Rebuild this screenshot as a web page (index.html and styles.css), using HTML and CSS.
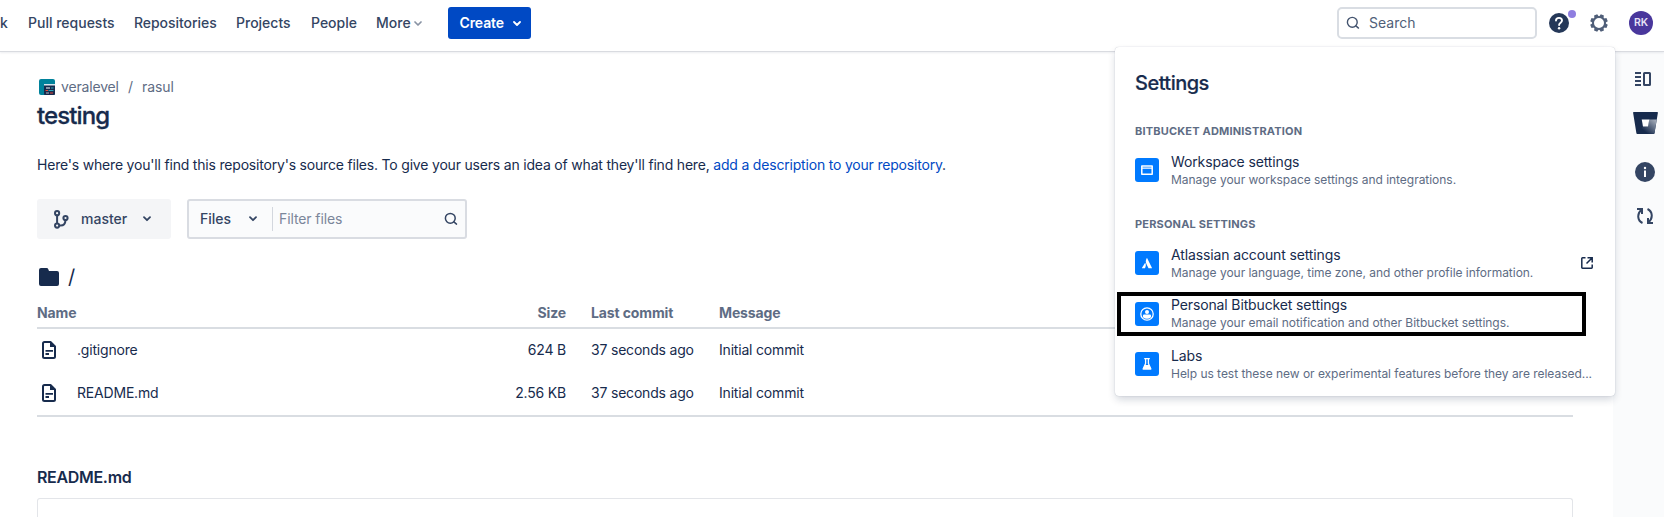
FILE: index.html
```html
<!DOCTYPE html>
<html lang="en">
<head>
<meta charset="utf-8">
<title>testing - Bitbucket</title>
<link rel="stylesheet" href="styles.css">
</head>
<body>
<header class="topbar">
  <nav class="nav">
    <span class="nav-item nav-cut">k</span>
    <span class="nav-item nav-pull">Pull requests</span>
    <span class="nav-item nav-repos">Repositories</span>
    <span class="nav-item nav-projects">Projects</span>
    <span class="nav-item nav-people">People</span>
    <span class="nav-item nav-more">More</span>
    <svg class="chev-more" width="8" height="5" viewBox="0 0 8 5"><path d="M1 1l3 3 3-3" fill="none" stroke="#8993a4" stroke-width="1.7" stroke-linecap="round" stroke-linejoin="round"/></svg>
  </nav>
  <button class="create"><span>Create</span><svg width="8" height="5" viewBox="0 0 8 5"><path d="M1 1l3 3 3-3" fill="none" stroke="#fff" stroke-width="1.8" stroke-linecap="round" stroke-linejoin="round"/></svg></button>
  <div class="search"><svg width="14" height="14" viewBox="0 0 14 14" fill="none" stroke="#44546f" stroke-width="1.4" stroke-linecap="round"><circle cx="6.3" cy="6.3" r="4.9"/><path d="M9.9 9.9l2.6 2.2"/></svg><span>Search</span></div>
  <div class="help">
    <svg width="20" height="20" viewBox="0 0 20 20"><circle cx="10" cy="10" r="10" fill="#253858"/><path d="M7 7.6C7 5.8 8.3 4.9 10 4.9s3 1 3 2.6c0 2.1-2.9 2.2-2.9 4.5" fill="none" stroke="#fff" stroke-width="1.9" stroke-linecap="round"/><circle cx="10.1" cy="15.2" r="1.2" fill="#fff"/></svg>
    <span class="dot"></span>
  </div>
  <svg class="gear" width="18" height="18" viewBox="0 0 18 18"><g fill="#505f79"><path id="tooth" d="M6.600 3.500L7.300.2h3.400L11.400 3.500z" transform="rotate(22.5 9 9)"/><use href="#tooth" transform="rotate(45 9 9)"/><use href="#tooth" transform="rotate(90 9 9)"/><use href="#tooth" transform="rotate(135 9 9)"/><use href="#tooth" transform="rotate(180 9 9)"/><use href="#tooth" transform="rotate(225 9 9)"/><use href="#tooth" transform="rotate(270 9 9)"/><use href="#tooth" transform="rotate(315 9 9)"/></g><circle cx="9" cy="9" r="6" fill="#fff" stroke="#505f79" stroke-width="2"/></svg>
  <span class="avatar">RK</span>
</header>

<div class="body">
  <main class="main">
    <div class="crumbs">
      <svg width="16" height="16" viewBox="0 0 16 16"><rect width="16" height="16" rx="2" fill="#00829b"/><rect x="5" y="5.300" width="11" height="10.700" rx="1" fill="#172b4d"/><rect x="5" y="5" width="11" height="1.500" fill="#d5e5ee"/><path d="M7 9h4" stroke="#fff" stroke-width="1"/><path d="M12 9h2.500M9.500 11.500h5" stroke="#2aa6bd" stroke-width="1"/><path d="M6.500 11.500H9M11 14h3" stroke="#e5493a" stroke-width="1"/><path d="M7 14h3" stroke="#b3bac5" stroke-width="1"/></svg>
      <span class="crumb-ws">veralevel</span><span class="crumb-sep">/</span><span class="crumb-pr">rasul</span>
    </div>
    <h1 class="title">testing</h1>
    <p class="desc">Here's where you'll find this repository's source files. To give your users an idea of what they'll find here, <a class="link">add a description to your repository</a>.</p>
    <div class="controls">
      <button class="branch">
        <svg width="15" height="19" viewBox="0 0 15 19" fill="none" stroke="#344563" stroke-width="2"><circle cx="3.100" cy="3.200" r="2.100"/><circle cx="3.100" cy="15.600" r="2.100"/><circle cx="11.500" cy="8" r="2.100"/><path d="M3.100 5.300v8.200M5.200 15.600h1.500c3 0 4.600-1.800 4.800-5.500"/></svg>
        <span class="branch-name">master</span>
        <svg width="8" height="6" viewBox="0 0 8 6"><path d="M1 1.200l3 3 3-3" fill="none" stroke="#344563" stroke-width="1.800" stroke-linecap="round" stroke-linejoin="round"/></svg>
      </button>
      <div class="filter">
        <span class="filter-kind">Files</span>
        <svg width="8" height="6" viewBox="0 0 8 6"><path d="M1 1.200l3 3 3-3" fill="none" stroke="#344563" stroke-width="1.800" stroke-linecap="round" stroke-linejoin="round"/></svg>
        <span class="filter-rule"></span>
        <span class="filter-text">Filter files</span>
        <svg width="14" height="14" viewBox="0 0 14 14" fill="none" stroke="#344563" stroke-width="1.500" stroke-linecap="round"><circle cx="6.300" cy="6.300" r="4.900"/><path d="M9.900 9.900l2.600 2.200"/></svg>
      </div>
    </div>
    <div class="path">
      <svg width="20" height="18" viewBox="0 0 20 18"><path d="M0 2a2 2 0 0 1 2-2h5.500A2 2 0 0 1 9.400 1.400L10 3h8a2 2 0 0 1 2 2v11a2 2 0 0 1-2 2H2a2 2 0 0 1-2-2z" fill="#172b4d"/></svg>
      <span>/</span>
    </div>
    <div class="table">
      <div class="tr th"><span>Name</span><span class="size">Size</span><span class="commit">Last commit</span><span>Message</span></div>
      <div class="tr"><span class="file"><svg width="14" height="18" viewBox="0 0 14 18"><path d="M8.500 1H2.500A1.500 1.500 0 0 0 1 2.500v13A1.500 1.500 0 0 0 2.500 17h9a1.500 1.500 0 0 0 1.500-1.500V5.500z" fill="none" stroke="#172b4d" stroke-width="2" stroke-linejoin="round"/><path d="M8 1v5h5z" fill="#172b4d"/><path d="M3.500 9.900h7.500M3.500 13h3.500" stroke="#172b4d" stroke-width="1.800"/></svg><span>.gitignore</span></span><span class="size">624 B</span><span class="commit">37 seconds ago</span><span>Initial commit</span></div>
      <div class="tr"><span class="file"><svg width="14" height="18" viewBox="0 0 14 18"><path d="M8.500 1H2.500A1.500 1.500 0 0 0 1 2.500v13A1.500 1.500 0 0 0 2.500 17h9a1.500 1.500 0 0 0 1.500-1.500V5.500z" fill="none" stroke="#172b4d" stroke-width="2" stroke-linejoin="round"/><path d="M8 1v5h5z" fill="#172b4d"/><path d="M3.500 9.900h7.500M3.500 13h3.500" stroke="#172b4d" stroke-width="1.800"/></svg><span>README.md</span></span><span class="size">2.56 KB</span><span class="commit">37 seconds ago</span><span>Initial commit</span></div>
    </div>
    <h2 class="readme">README.md</h2>
    <div class="readme-box"></div>
  </main>
  <aside class="rail">
    <svg class="rail-panel" width="16" height="14" viewBox="0 0 16 14"><path d="M0 1h6M0 5h6M0 9h6M0 13h6" stroke="#344563" stroke-width="2"/><rect x="9" y="1" width="6" height="12" fill="none" stroke="#344563" stroke-width="2" rx=".5"/></svg>
    <svg class="rail-bb" width="25" height="22" viewBox="0 0 25 22"><defs><linearGradient id="bb" x1="1" y1=".1" x2=".3" y2=".75"><stop offset="0" stop-color="#a5adba"/><stop offset="1" stop-color="#172b4d"/></linearGradient></defs><path d="M.8 0h23.400a.7.700 0 0 1 .7.800L21.500 21.300a.8.800 0 0 1-.8.700H4.300a.9.900 0 0 1-.9-.7L.1.800A.7.700 0 0 1 .8 0z" fill="#172b4d"/><path d="M23.700 7.500H16L14.800 14.500H10L4.500 21.800h16.200a.8.800 0 0 0 .8-.7z" fill="url(#bb)"/><path d="M8.700 7.500h7.600L15 14.500H10z" fill="#fff"/></svg>
    <svg class="rail-info" width="20" height="20" viewBox="0 0 20 20"><circle cx="10" cy="10" r="10" fill="#344563"/><rect x="9" y="8.500" width="2" height="6.500" fill="#fff"/><circle cx="10" cy="6" r="1.200" fill="#fff"/></svg>
    <svg class="rail-sync" width="16" height="16" viewBox="0 0 16 16" fill="none" stroke="#344563" stroke-width="2"><path d="M5.500 15C.2 12.500-.2 5.500 4.600 1.800M0 1h5v5"/><path d="M10.500 1c5.300 2.500 5.700 9.500.9 13.200M16 15h-5v-5"/></svg>
  </aside>
</div>

<section class="popup">
  <h2 class="pop-title">Settings</h2>
  <h3 class="pop-head">BITBUCKET ADMINISTRATION</h3>
  <div class="item">
    <svg class="tile" width="24" height="24" viewBox="0 0 24 24"><path d="M6.800 8h10.400v8.300H6.800z" fill="none" stroke="#fff" stroke-width="1.500" stroke-linejoin="round"/><path d="M7 10.200h10" stroke="#fff" stroke-width="1.300"/></svg>
    <div class="item-text"><div class="it">Workspace settings</div><div class="id">Manage your workspace settings and integrations.</div></div>
  </div>
  <h3 class="pop-head">PERSONAL SETTINGS</h3>
  <div class="item">
    <svg class="tile" width="24" height="24" viewBox="0 0 24 24"><path d="M10.200 11.700c.9 1.500.9 3-.2 5.600H7.400c-.3 0-.5-.3-.4-.6z" fill="#fff"/><path d="M11.700 7.200c-1.300 2.300-1.200 4 .1 6.500l1.700 3.600h3c.4 0 .6-.3.400-.6L12.200 7.200c-.1-.2-.4-.2-.5 0z" fill="#fff"/></svg>
    <div class="item-text"><div class="it">Atlassian account settings</div><div class="id">Manage your language, time zone, and other profile information.</div></div>
    <svg class="ext" width="12" height="12" viewBox="0 0 12 12" fill="none" stroke="#172b4d" stroke-width="1.500"><path d="M4.500.8H1.500a.7.700 0 0 0-.7.700v9a.7.700 0 0 0 .7.700h9a.7.700 0 0 0 .7-.7V7.500M6.500.8h4.700v4.700M11 1L5.500 6.500"/></svg>
  </div>
  <div class="item item-me">
    <svg class="tile" width="24" height="24" viewBox="0 0 24 24"><circle cx="12" cy="12" r="6.200" fill="none" stroke="#fff" stroke-width="1.300"/><circle cx="12" cy="9.900" r="2" fill="#fff"/><path d="M8 13.500c0-.7.500-1.100 1.200-1.100h5.600c.7 0 1.200.4 1.200 1.100v1.800a6 6 0 0 1-8 0z" fill="#fff"/></svg>
    <div class="item-text"><div class="it">Personal Bitbucket settings</div><div class="id">Manage your email notification and other Bitbucket settings.</div></div>
  </div>
  <div class="item item-labs">
    <svg class="tile" width="24" height="24" viewBox="0 0 24 24"><path d="M9.200 6.700h5.600M10.600 7v4.500L8.200 16.800h7.600L13.400 11.500V7" fill="none" stroke="#fff" stroke-width="1.300" stroke-linejoin="round"/><path d="M9.800 13h4.400l2.200 4.500H7.600z" fill="#fff"/></svg>
    <div class="item-text"><div class="it">Labs</div><div class="id">Help us test these new or experimental features before they are released...</div></div>
  </div>
  <div class="marker"></div>
</section>
</body>
</html>
```
FILE: styles.css
```css
* { box-sizing: border-box; }
html, body { margin: 0; height: 517px; overflow: hidden; }
body {
  font: 14px/20px Inter, "Liberation Sans", sans-serif;
  color: #172b4d;
  background: #fff;
  display: flex;
  flex-direction: column;
}
svg { display: block; flex: none; }
span, .it, .id, h1, h2, h3 { white-space: nowrap; }
h1, h2, h3, p { margin: 0; }
button { font: inherit; border: 0; margin: 0; padding: 0; }

.topbar {
  height: 51px;
  flex: none;
  display: flex;
  align-items: flex-start;
  position: relative;
  box-shadow: 0 1px 0 #d9dbe0, 0 2px 2px rgba(9, 30, 66, .08);
}
.nav { display: flex; align-items: center; height: 46px; width: 448px; }
.nav-item { font-weight: 500; color: #344563; flex: none; }
.nav-cut { width: 28px; }
.nav-pull { width: 106px; }
.nav-repos { width: 102px; letter-spacing: -.05px; }
.nav-projects { width: 75px; }
.nav-people { width: 65px; }
.nav-more { width: 38px; }
.create {
  margin-top: 7px;
  width: 83px;
  height: 32px;
  border-radius: 3px;
  background: #0049c4;
  color: #fff;
  font-weight: 600;
  letter-spacing: -.1px;
  display: flex;
  align-items: center;
  justify-content: space-between;
  padding: 0 10px 0 11.500px;
}
.search {
  margin: 7px 0 0 auto;
  width: 200px;
  height: 32px;
  border: 2px solid #d9dde3;
  border-radius: 5px;
  display: flex;
  align-items: center;
  gap: 9px;
  padding-left: 7px;
  color: #505f79;
}
.help { position: relative; margin: 13px 0 0 12px; }
.dot { position: absolute; left: 19px; top: -3px; width: 8px; height: 8px; border-radius: 50%; background: #8f7ee0; }
.gear { margin: 14px 0 0 20.500px; }
.avatar {
  margin: 11px 11px 0 21.500px;
  width: 24px;
  height: 24px;
  border-radius: 50%;
  background: #49379c;
  color: #e6e2f6;
  font-size: 10.500px;
  font-weight: 600;
  line-height: 24px;
  text-align: center;
}

.body { flex: 1; display: flex; min-height: 0; }
.main { flex: 1; padding: 26px 40px 0 37px; display: flex; flex-direction: column; min-width: 0; }
.crumbs { display: flex; align-items: center; height: 20px; padding-left: 2px; color: #5e6c84; }
.crumb-ws { margin-left: 6px; width: 67px; letter-spacing: -.17px; }
.crumb-sep { width: 14px; }
.crumb-pr { letter-spacing: -.1px; }
.title { margin-top: 5px; font-size: 24px; line-height: 28px; font-weight: 500; letter-spacing: -.9px; -webkit-text-stroke: .3px #172b4d; }
.desc { margin-top: 25px; letter-spacing: -.193px; }
.link { color: #0049c4; }
.controls { margin-top: 24px; display: flex; gap: 16px; }
.branch {
  width: 134px;
  height: 40px;
  border-radius: 3px;
  background: #f4f5f7;
  color: #344563;
  font-weight: 500;
  display: flex;
  align-items: center;
  padding-left: 17px;
}
.branch-name { margin-left: 12px; width: 62px; text-align: left; }
.filter {
  width: 280px;
  height: 40px;
  border: 2px solid #d9dce2;
  border-radius: 3px;
  background: #fafbfc;
  display: flex;
  align-items: center;
  padding: 0 7px 0 11px;
}
.filter-kind { width: 49px; font-weight: 500; color: #344563; }
.filter-rule { width: 1px; height: 24px; margin: 0 6px 0 15px; background: #d3d7de; }
.filter-text { flex: 1; color: #7a869a; letter-spacing: -.1px; }
.path { margin-top: 26px; height: 24px; display: flex; align-items: center; gap: 9px; padding-left: 2px; font-size: 20px; line-height: 24px; }
.table { margin-top: 14px; border-bottom: 2px solid #d9dde2; letter-spacing: -.19px; }
.tr { height: 43px; padding-bottom: 2px; display: grid; grid-template-columns: 429px 100px 153px 1fr; align-items: center; }
.th { height: 26px; padding-bottom: 0; align-items: start; border-bottom: 2px solid #d9dde2; color: #5e6c84; font-weight: 700; letter-spacing: -.13px; }
.size { text-align: right; }
.commit { padding-left: 25px; }
.file { display: flex; align-items: center; gap: 21px; padding-left: 5px; }
.readme { margin-top: 50px; font-size: 16px; line-height: 20px; font-weight: 600; letter-spacing: -.32px; }
.readme-box { margin-top: 11px; height: 19px; flex: none; border: 1px solid #e3e5e9; border-bottom: 0; border-radius: 3px 3px 0 0; }
.rail { width: 51px; background: #fafbfc; display: flex; flex-direction: column; }
.rail-panel { margin: 21px 0 0 22px; }
.rail-bb { margin: 26px 0 0 20px; }
.rail-info { margin: 28px 0 0 22px; }
.rail-sync { margin: 26px 0 0 24px; }

.popup {
  position: absolute;
  left: 1115px;
  top: 47px;
  width: 500px;
  height: 349px;
  padding: 24px 20px 0;
  background: #fff;
  border-radius: 4px;
  box-shadow: 0 0 1px rgba(9, 30, 66, .31), 0 4px 8px -1px rgba(9, 30, 66, .2);
}
.pop-title { font-size: 20px; line-height: 24px; font-weight: 500; letter-spacing: -.52px; -webkit-text-stroke: .2px #172b4d; }
.pop-head { margin-top: 28px; font-size: 11px; line-height: 16px; font-weight: 700; letter-spacing: .18px; color: #5e6c84; }
.item { display: flex; align-items: center; gap: 12px; height: 36px; margin-top: 13px; }
.item-me { margin-top: 15px; }
.item-labs { margin-top: 14px; }
.tile { border-radius: 3px; background: #007aff; }
.item-text { flex: 1; min-width: 0; align-self: flex-start; padding-top: 1px; }
.item-me .item-text { padding-top: 0; }
.it { line-height: 18px; letter-spacing: -.13px; }
.id { margin-top: 1px; font-size: 12px; line-height: 16px; letter-spacing: -.03px; color: #5e6c84; }
.ext { margin-right: 2px; }
.marker { position: absolute; left: 2px; top: 245px; width: 469px; height: 44px; border: 4px solid #000; }
```
